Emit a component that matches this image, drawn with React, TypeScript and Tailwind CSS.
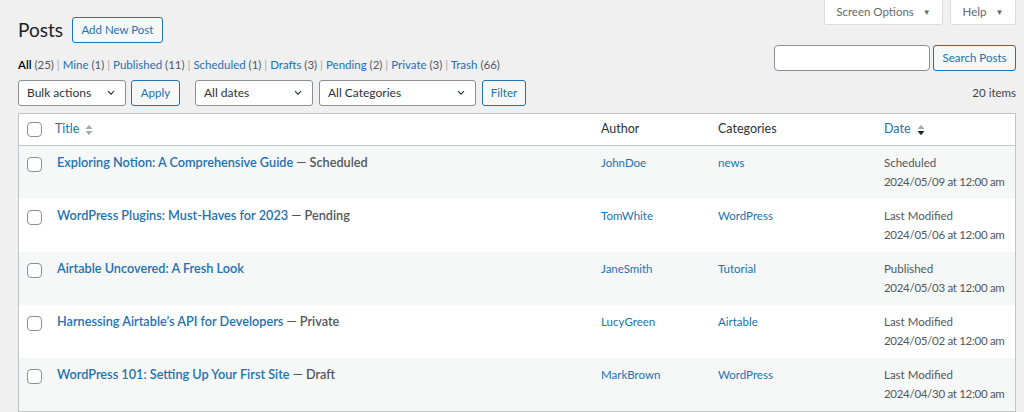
import React from "react";

const font = { fontFamily: 'Lato, "Noto Sans", sans-serif' };

function Chevron() {
  return (
    <svg width="12" height="12" viewBox="0 0 20 20" className="shrink-0">
      <path d="M5 7l5 5 5-5" fill="none" stroke="#2c3338" strokeWidth="2" />
    </svg>
  );
}

function Select({ label, w }: { label: string; w: string }) {
  return (
    <div
      className={`${w} h-[26px] flex items-center justify-between pl-[8px] pr-[8px] bg-white border border-[#8c8f94] rounded-[3px] text-[12px] text-[#2c3338]`}
    >
      <span>{label}</span>
      <Chevron />
    </div>
  );
}

function Btn({ label, w }: { label: string; w: string }) {
  return (
    <div
      className={`${w} h-[26px] flex items-center justify-center bg-[#f6f7f7] border border-[#2271b1] rounded-[3px] text-[11.5px] text-[#2271b1]`}
    >
      {label}
    </div>
  );
}

function SortIcon({ active }: { active?: boolean }) {
  return (
    <svg width="8" height="12" viewBox="0 0 8 12" className="ml-[6px]">
      <path d="M0.5 5L4 0.8 7.5 5z" fill="#a7aaad" />
      <path d="M0.5 7L4 11.2 7.5 7z" fill={active ? "#1d2327" : "#a7aaad"} />
    </svg>
  );
}

function Checkbox() {
  return <div className="w-[15px] h-[15px] bg-white border border-[#8c8f94] rounded-[4px]" />;
}

const rows = [
  {
    title: "Exploring Notion: A Comprehensive Guide",
    state: "Scheduled",
    author: "JohnDoe",
    cat: "news",
    status: "Scheduled",
    date: "2024/05/09 at 12:00 am",
  },
  {
    title: "WordPress Plugins: Must-Haves for 2023",
    state: "Pending",
    author: "TomWhite",
    cat: "WordPress",
    status: "Last Modified",
    date: "2024/05/06 at 12:00 am",
  },
  {
    title: "Airtable Uncovered: A Fresh Look",
    state: "",
    author: "JaneSmith",
    cat: "Tutorial",
    status: "Published",
    date: "2024/05/03 at 12:00 am",
  },
  {
    title: "Harnessing Airtable’s API for Developers",
    state: "Private",
    author: "LucyGreen",
    cat: "Airtable",
    status: "Last Modified",
    date: "2024/05/02 at 12:00 am",
  },
  {
    title: "WordPress 101: Setting Up Your First Site",
    state: "Draft",
    author: "MarkBrown",
    cat: "WordPress",
    status: "Last Modified",
    date: "2024/04/30 at 12:00 am",
  },
];

const filters: [string, string][] = [
  ["All", "25"],
  ["Mine", "1"],
  ["Published", "11"],
  ["Scheduled", "1"],
  ["Drafts", "3"],
  ["Pending", "2"],
  ["Private", "3"],
  ["Trash", "66"],
];

const grid = "grid grid-cols-[29px_543px_117px_166px_1fr]";

export default function App() {
  return (
    <div className="w-full min-h-[412px] bg-[#f0f0f1] pl-[18px] pr-[8px] text-[13px] text-[#3c434a]" style={font}>
      {/* Row A */}
      <div className="flex justify-between items-start h-[43px]">
        <div className="flex items-center pt-[17px] gap-[9px]">
          <h1 className="text-[19px] leading-[26px] text-[#1d2327] font-normal">Posts</h1>
          <Btn label="Add New Post" w="w-[91px]" />
        </div>
        <div className="flex gap-[7px] text-[11.5px]">
          <div className="w-[119px] h-[25px] flex items-center justify-center gap-[9px] bg-white border border-t-0 border-[#dcdcde] rounded-b-[3px] text-[#646970]">
            <span>Screen Options</span>
            <span className="text-[8px]">▼</span>
          </div>
          <div className="w-[66px] h-[25px] flex items-center justify-center gap-[9px] bg-white border border-t-0 border-[#dcdcde] rounded-b-[3px] text-[#646970]">
            <span>Help</span>
            <span className="text-[8px]">▼</span>
          </div>
        </div>
      </div>

      {/* Row B */}
      <div className="flex justify-between items-start mt-[2px] h-[26px]">
        <div className="pt-[10px] leading-[20px] whitespace-nowrap text-[11.5px]">
          {filters.map(([name, count], i) => (
            <span key={name}>
              {i === 0 ? (
                <span className="font-semibold text-[#000]">{name}</span>
              ) : (
                <span className="text-[#2271b1]">{name}</span>
              )}
              <span className="text-[#50575e]"> ({count})</span>
              {i < filters.length - 1 && <span className="text-[#a7aaad]"> | </span>}
            </span>
          ))}
        </div>
        <div className="flex gap-[3px]">
          <div className="w-[156px] h-[26px] bg-white border border-[#8c8f94] rounded-[4px]" />
          <Btn label="Search Posts" w="w-[83px]" />
        </div>
      </div>

      {/* Row C */}
      <div className="flex justify-between items-center mt-[9px] h-[26px]">
        <div className="flex items-center">
          <Select label="Bulk actions" w="w-[108px]" />
          <div className="ml-[5px]">
            <Btn label="Apply" w="w-[49px]" />
          </div>
          <div className="ml-[15px]">
            <Select label="All dates" w="w-[118px]" />
          </div>
          <div className="ml-[6px]">
            <Select label="All Categories" w="w-[157px]" />
          </div>
          <div className="ml-[6px]">
            <Btn label="Filter" w="w-[44px]" />
          </div>
        </div>
        <div className="text-[11.5px] text-[#3c434a]">20 items</div>
      </div>

      {/* Table */}
      <div className="mt-[7px] bg-white border border-[#c3c4c7]">
        <div className={`${grid} h-[32px] items-center border-b border-[#c3c4c7] text-[12.5px]`}>
          <div className="pl-[8px] flex items-center">
            <Checkbox />
          </div>
          <div className="pl-[7px] flex items-center text-[#2271b1]">
            <span>Title</span>
            <SortIcon />
          </div>
          <div className="pl-[10px] text-[#2c3338]">Author</div>
          <div className="pl-[10px] text-[#2c3338]">Categories</div>
          <div className="pl-[10px] flex items-center text-[#2271b1]">
            <span>Date</span>
            <SortIcon active />
          </div>
        </div>
        {rows.map((r, i) => (
          <div key={i} className={`${grid} h-[53px] items-start ${i % 2 === 0 ? "bg-[#f6f7f7]" : "bg-white"}`}>
            <div className="pl-[8px] pt-[11px]">
              <Checkbox />
            </div>
            <div className="pl-[9px] pt-[7px] leading-[19px] text-[12.7px] font-semibold whitespace-nowrap">
              <span className="text-[#2271b1]">{r.title}</span>
              {r.state && <span className="text-[#50575e]"> — {r.state}</span>}
            </div>
            <div className="pl-[10px] pt-[7px] leading-[19px] text-[11.5px] text-[#2271b1]">{r.author}</div>
            <div className="pl-[10px] pt-[7px] leading-[19px] text-[11.5px] text-[#2271b1]">{r.cat}</div>
            <div className="pl-[10px] pt-[7px] leading-[19px] text-[11.5px] text-[#50575e] whitespace-nowrap">
              <div>{r.status}</div>
              <div className="tracking-[-0.3px]">{r.date}</div>
            </div>
          </div>
        ))}
      </div>
    </div>
  );
}
